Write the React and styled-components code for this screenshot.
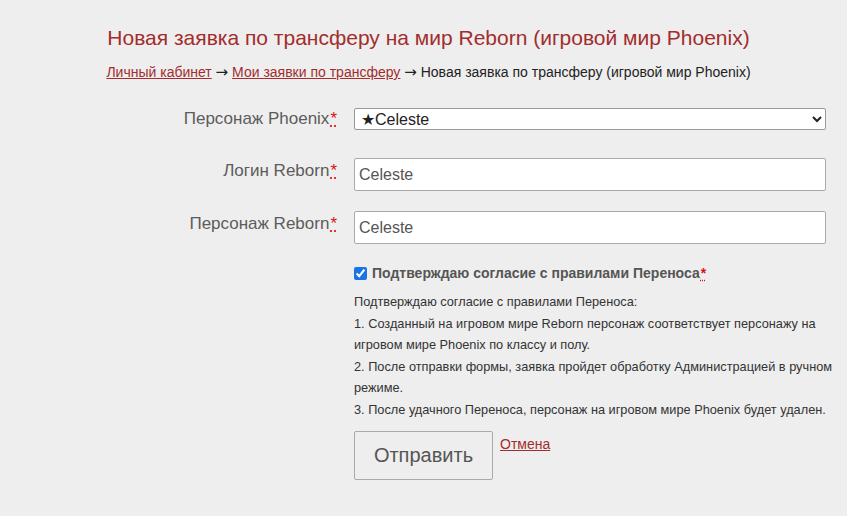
import React from 'react';
import styled, { createGlobalStyle } from 'styled-components';

const GlobalStyle = createGlobalStyle`
  html, body {
    margin: 0;
    padding: 0;
    background: #eeeeee;
    font-family: Arial, "Liberation Sans", sans-serif;
  }
`;

const Page = styled.div`
  width: 847px;
  padding: 23px 0 30px;
  box-sizing: border-box;
`;

const Title = styled.h1`
  margin: 0 0 0 10px;
  text-align: center;
  font-size: 21px;
  font-weight: normal;
  color: #a22d2d;
  line-height: 30px;
`;

const Crumbs = styled.div`
  margin: 9px 0 0 10px;
  text-align: center;
  font-size: 14px;
  color: #222;
  line-height: 20px;
`;

const Arrow = styled.span`
  font-family: "DejaVu Sans", sans-serif;
  font-size: 15px;
`;

const Link = styled.a`
  color: #a22d2d;
  text-decoration: underline;
  cursor: pointer;
`;

const Form = styled.form`
  display: grid;
  grid-template-columns: 337px 472px;
  column-gap: 17px;
  margin-top: 26px;
`;

const Label = styled.label`
  text-align: right;
  font-size: 17px;
  color: #5c5c5c;
  padding-top: ${(p) => p.$top || 4}px;
`;

const Req = styled.abbr`
  color: #d11;
  text-decoration: underline dotted;
  text-underline-offset: 2px;
  border: 0;
  margin-left: 1px;
`;

const Field = styled.div`
  margin-bottom: ${(p) => p.$gap}px;
`;

const Select = styled.select`
  display: block;
  width: 100%;
  height: 22px;
  box-sizing: border-box;
  font-family: Arial, "Liberation Sans", sans-serif;
  font-size: 16px;
  color: #222;
  background: #fff;
  border: 1px solid #999;
  border-radius: 2px;
  padding: 0 2px;
`;

const Input = styled.input`
  display: block;
  width: 100%;
  height: 33px;
  box-sizing: border-box;
  font-family: Arial, "Liberation Sans", sans-serif;
  font-size: 16px;
  color: #555;
  background: #fff;
  border: 1px solid #aaa;
  border-radius: 2px;
  padding: 0 4px;
`;

const Empty = styled.div``;

const CheckRow = styled.label`
  display: flex;
  align-items: center;
  gap: 5px;
  font-size: 14px;
  font-weight: bold;
  color: #555;
  margin-top: 3px;

  input {
    margin: 0;
    width: 13px;
    height: 13px;
    accent-color: #1a73e8;
  }
`;

const Rules = styled.div`
  margin: 10px -24px 0 0;
  font-size: 12.75px;
  line-height: 21.6px;
  color: #333;
`;

const Actions = styled.div`
  display: flex;
  align-items: flex-start;
  gap: 7px;
  margin-top: 10px;
`;

const Submit = styled.button`
  width: 139px;
  height: 49px;
  font-family: Arial, "Liberation Sans", sans-serif;
  font-size: 20px;
  color: #555;
  background: #eeeeee;
  border: 1px solid #aaa;
  border-radius: 2px;
`;

const Cancel = styled(Link)`
  font-size: 14px;
  margin-top: 5px;
`;

export default function App() {
  return (
    <Page>
      <GlobalStyle />
      <Title>Новая заявка по трансферу на мир Reborn (игровой мир Phoenix)</Title>
      <Crumbs>
        <Link>Личный кабинет</Link> <Arrow>→</Arrow> <Link>Мои заявки по трансферу</Link>{' '}
        <Arrow>→</Arrow> Новая заявка по трансферу (игровой мир Phoenix)
      </Crumbs>
      <Form>
        <Label $top={1}>
          Персонаж Phoenix<Req title="обязательно">*</Req>
        </Label>
        <Field $gap={28}>
          <Select defaultValue="celeste">
            <option value="celeste">★Celeste</option>
          </Select>
        </Field>

        <Label $top={3}>
          Логин Reborn<Req title="обязательно">*</Req>
        </Label>
        <Field $gap={20}>
          <Input defaultValue="Celeste" />
        </Field>

        <Label $top={3}>
          Персонаж Reborn<Req title="обязательно">*</Req>
        </Label>
        <Field $gap={18}>
          <Input defaultValue="Celeste" />
        </Field>

        <Empty />
        <Field $gap={0}>
          <CheckRow>
            <input type="checkbox" defaultChecked />
            <span>
              Подтверждаю согласие с правилами Переноса<Req title="обязательно">*</Req>
            </span>
          </CheckRow>
          <Rules>
            Подтверждаю согласие с правилами Переноса:
            <br />
            1. Созданный на игровом мире Reborn персонаж соответствует персонажу на
            <br />
            игровом мире Phoenix по классу и полу.
            <br />
            2. После отправки формы, заявка пройдет обработку Администрацией в ручном
            <br />
            режиме.
            <br />
            3. После удачного Переноса, персонаж на игровом мире Phoenix будет удален.
          </Rules>
          <Actions>
            <Submit type="button">Отправить</Submit>
            <Cancel>Отмена</Cancel>
          </Actions>
        </Field>
      </Form>
    </Page>
  );
}
